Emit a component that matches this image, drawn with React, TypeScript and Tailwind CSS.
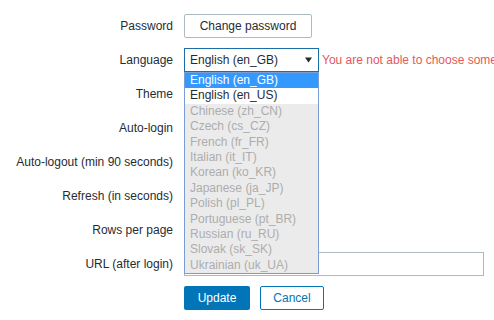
const languages = [
  { name: "English (en_GB)", state: "selected" },
  { name: "English (en_US)", state: "enabled" },
  { name: "Chinese (zh_CN)", state: "disabled" },
  { name: "Czech (cs_CZ)", state: "disabled" },
  { name: "French (fr_FR)", state: "disabled" },
  { name: "Italian (it_IT)", state: "disabled" },
  { name: "Korean (ko_KR)", state: "disabled" },
  { name: "Japanese (ja_JP)", state: "disabled" },
  { name: "Polish (pl_PL)", state: "disabled" },
  { name: "Portuguese (pt_BR)", state: "disabled" },
  { name: "Russian (ru_RU)", state: "disabled" },
  { name: "Slovak (sk_SK)", state: "disabled" },
  { name: "Ukrainian (uk_UA)", state: "disabled" },
]

function Label({ children }: { children: string }) {
  return <div className="text-right whitespace-nowrap leading-[24px]">{children}</div>
}

function LanguageList() {
  return (
    <div className="absolute left-0 top-[24px] z-10 w-[135px] border border-[#7a9cd3] bg-[#ebebeb]">
      {languages.map((lang) => (
        <div
          key={lang.name}
          className={
            lang.state === "selected"
              ? "h-[15.4px] leading-[15.4px] pl-[5px] bg-[#3399ff] text-white"
              : lang.state === "enabled"
                ? "h-[15.4px] leading-[15.4px] pl-[5px] bg-white text-[#1f2c33]"
                : "h-[15.4px] leading-[15.4px] pl-[5px] text-[#adadad]"
          }
        >
          {lang.name}
        </div>
      ))}
    </div>
  )
}

export default function App() {
  return (
    <div className="w-[494px] h-[320px] overflow-hidden bg-white text-[12px] text-[#1f2c33] font-['Liberation_Sans',Arial,sans-serif]">
      <div className="pt-[14px] grid grid-cols-[173px_1fr] gap-x-[11px] gap-y-[10px]">
        <Label>Password</Label>
        <div>
          <button className="h-[24px] w-[128px] border border-[#acbbc2] rounded-[2px] bg-white text-[#1f2c33]">
            Change password
          </button>
        </div>

        <Label>Language</Label>
        <div className="flex items-center gap-[3px]">
          <div className="relative shrink-0">
            <div className="h-[24px] w-[135px] border border-[#1b6ea6] flex items-center justify-between pl-[5px] pr-[6px]">
              <span>English (en_GB)</span>
              <svg width="7" height="6" viewBox="0 0 7 6">
                <path d="M0 0.5 L7 0.5 L3.5 5.5 Z" fill="#1f2c33" />
              </svg>
            </div>
            <LanguageList />
          </div>
          <span className="whitespace-nowrap text-[#e45959]">
            You are not able to choose some of the languages, because locales for them are not installed on the web server.
          </span>
        </div>

        <Label>Theme</Label>
        <div className="h-[24px] w-[120px] border border-[#acbbc2]" />

        <Label>Auto-login</Label>
        <div className="h-[24px] flex items-center">
          <div className="w-[14px] h-[14px] border border-[#acbbc2]" />
        </div>

        <Label>Auto-logout (min 90 seconds)</Label>
        <div className="h-[24px] flex items-center gap-[8px]">
          <div className="w-[14px] h-[14px] border border-[#acbbc2]" />
          <div className="h-[24px] w-[60px] border border-[#acbbc2]" />
        </div>

        <Label>Refresh (in seconds)</Label>
        <div className="h-[24px] w-[60px] border border-[#acbbc2]" />

        <Label>Rows per page</Label>
        <div className="h-[24px] w-[60px] border border-[#acbbc2]" />

        <Label>URL (after login)</Label>
        <div className="h-[24px] w-[300px] border border-[#acbbc2]" />

        <div />
        <div className="flex gap-[10px]">
          <button className="h-[24px] w-[66px] rounded-[2px] bg-[#0275b8] text-white">Update</button>
          <button className="h-[24px] w-[64px] rounded-[2px] border border-[#0275b8] bg-white text-[#0275b8]">
            Cancel
          </button>
        </div>
      </div>
    </div>
  )
}
